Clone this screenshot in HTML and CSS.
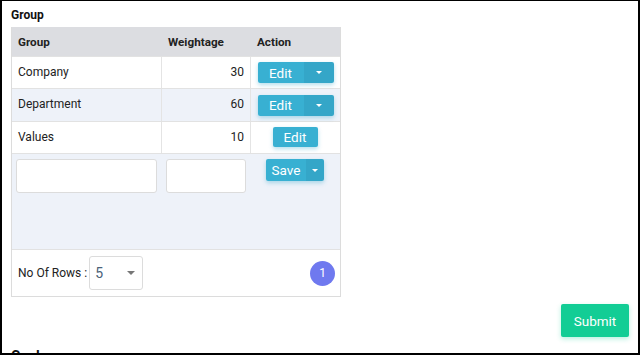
FILE: index.html
```html
<!DOCTYPE html>
<html>
<head>
<meta charset="utf-8">
<link rel="stylesheet" href="styles.css">
</head>
<body>
<div class="frame">
  <div class="content">
    <h3 class="title">Group</h3>
    <div class="grid">
      <div class="row head">
        <div class="c c1">Group</div>
        <div class="c c2">Weightage</div>
        <div class="c c3">Action</div>
      </div>
      <div class="row r32">
        <div class="c c1">Company</div>
        <div class="c c2 num">30</div>
        <div class="c c3"><span class="split"><span class="main">Edit</span><span class="drop"><i class="caret"></i></span></span></div>
      </div>
      <div class="row alt">
        <div class="c c1">Department</div>
        <div class="c c2 num">60</div>
        <div class="c c3"><span class="split"><span class="main">Edit</span><span class="drop"><i class="caret"></i></span></span></div>
      </div>
      <div class="row r32">
        <div class="c c1">Values</div>
        <div class="c c2 num">10</div>
        <div class="c c3"><span class="btn single">Edit</span></div>
      </div>
      <div class="row addrow">
        <div class="ac a1"><input class="inp inp1" type="text"></div>
        <div class="ac a2"><input class="inp inp2" type="text"></div>
        <div class="ac a3"><span class="split save"><span class="main">Save</span><span class="drop"><i class="caret"></i></span></span></div>
      </div>
      <div class="footer">
        <span class="lbl">No Of Rows :</span>
        <span class="select"><span class="val">5</span><i class="caret grey"></i></span>
        <span class="spacer"></span>
        <span class="page">1</span>
      </div>
    </div>
    <div class="actions"><span class="submit">Submit</span></div>
    <h3 class="title next">Goals</h3>
  </div>
</div>
</body>
</html>
```

FILE: styles.css
```css
* { box-sizing: border-box; }
html, body { margin: 0; padding: 0; background: #fff; }
body { font-family: Roboto, "Liberation Sans", sans-serif; color: #222; }
.frame {
  width: 640px;
  height: 355px;
  border: 2px solid #000;
  border-top-width: 1px;
  overflow: hidden;
  position: relative;
  margin: 0;
}
.content { padding: 6px 9px 0 9px; }
.title { margin: 0; font-size: 12px; font-weight: 700; line-height: 16px; height: 20px; color: #111; }
.grid {
  width: 330px;
  border: 1px solid #dcdcdc;
  border-top: none;
  font-size: 12px;
}
.row { display: flex; border-top: 1px solid #e2e2e2; height: 33px; }
.row.r32 { height: 32px; }
.row.head { background: #dcdde1; height: 29px; border-top: none; font-weight: 700; font-size: 11.7px; }
.row.alt { background: #eef2f9; }
.c { display: flex; align-items: center; padding: 0 6px; }
.row .c1 { width: 150px; border-right: 1px solid #e4e4e4; padding-bottom: 2px; }
.row .c2 { width: 89px; border-right: 1px solid #e4e4e4; padding-bottom: 2px; }
.row .c3 { flex: 1; justify-content: center; padding: 0; }
.row.head .c { border-right: none; padding-bottom: 0; }
.row.head .c3 { justify-content: flex-start; padding-left: 6px; }
.num { justify-content: flex-end; }
.split {
  display: inline-flex;
  height: 21px;
  border-radius: 2px;
  overflow: hidden;
  box-shadow: 0 2px 4px rgba(40,160,200,0.35);
  color: #fff;
  font-size: 13.5px;
  margin-left: 0;
}
.split .main { background: #38b0d2; width: 46px; display: flex; align-items: center; justify-content: center; }
.split .drop { background: #34a6c8; width: 30px; display: flex; align-items: center; justify-content: center; }
.caret { display: inline-block; width: 0; height: 0; border-left: 3.5px solid transparent; border-right: 3.5px solid transparent; border-top: 3.5px solid #fff; }
.btn.single {
  display: inline-flex; align-items: center; justify-content: center;
  width: 45px; height: 20px; background: #38b0d2; color: #fff; font-size: 13.5px;
  border-radius: 2px; box-shadow: 0 2px 4px rgba(40,160,200,0.35); margin-left: -1px; margin-top: -1px;
}
.row.addrow { background: #eef2f9; height: 96px; }
.ac { padding-top: 5px; }
.a1 { width: 150px; padding-left: 4px; }
.a2 { width: 89px; padding-left: 4px; }
.a3 { flex: 1; display: flex; justify-content: center; padding-top: 5px; }
.inp { height: 34px; border: 1px solid #dcdcdc; border-radius: 3px; background: #fff; outline: none; padding: 0 6px; display: block; }
.inp1 { width: 141px; }
.inp2 { width: 80px; }
.split.save { height: 22px; margin-left: -1px; }
.split.save .main { width: 40px; }
.split.save .drop { width: 18px; }
.footer { display: flex; align-items: center; height: 47px; border-top: 1px solid #e2e2e2; padding: 0 6px; background: #fff; }
.lbl { font-size: 12px; }
.select { margin-left: 2px; width: 54px; height: 34px; border: 1px solid #dcdcdc; border-radius: 3px; display: flex; align-items: center; padding: 0 0 0 5px; }
.select .val { color: #4a6178; font-size: 14px; flex: 1; }
.caret.grey { border-top-color: #777; border-left-width: 4px; border-right-width: 4px; border-top-width: 4px; margin-right: 7px; }
.spacer { flex: 1; }
.page { width: 25px; height: 25px; border-radius: 50%; background: #6f79ef; color: #fff; font-size: 12px; display: flex; align-items: center; justify-content: center; margin-right: -1px; }
.actions { display: flex; justify-content: flex-end; padding-top: 7px; width: 618px; }
.submit { width: 68px; height: 33px; background: #12cd95; color: #fff; font-size: 13.5px; display: flex; align-items: center; justify-content: center; border-radius: 2px; box-shadow: 0 2px 5px rgba(18,205,149,0.3); }
.title.next { margin-top: 11px; font-size: 14px; }
```
